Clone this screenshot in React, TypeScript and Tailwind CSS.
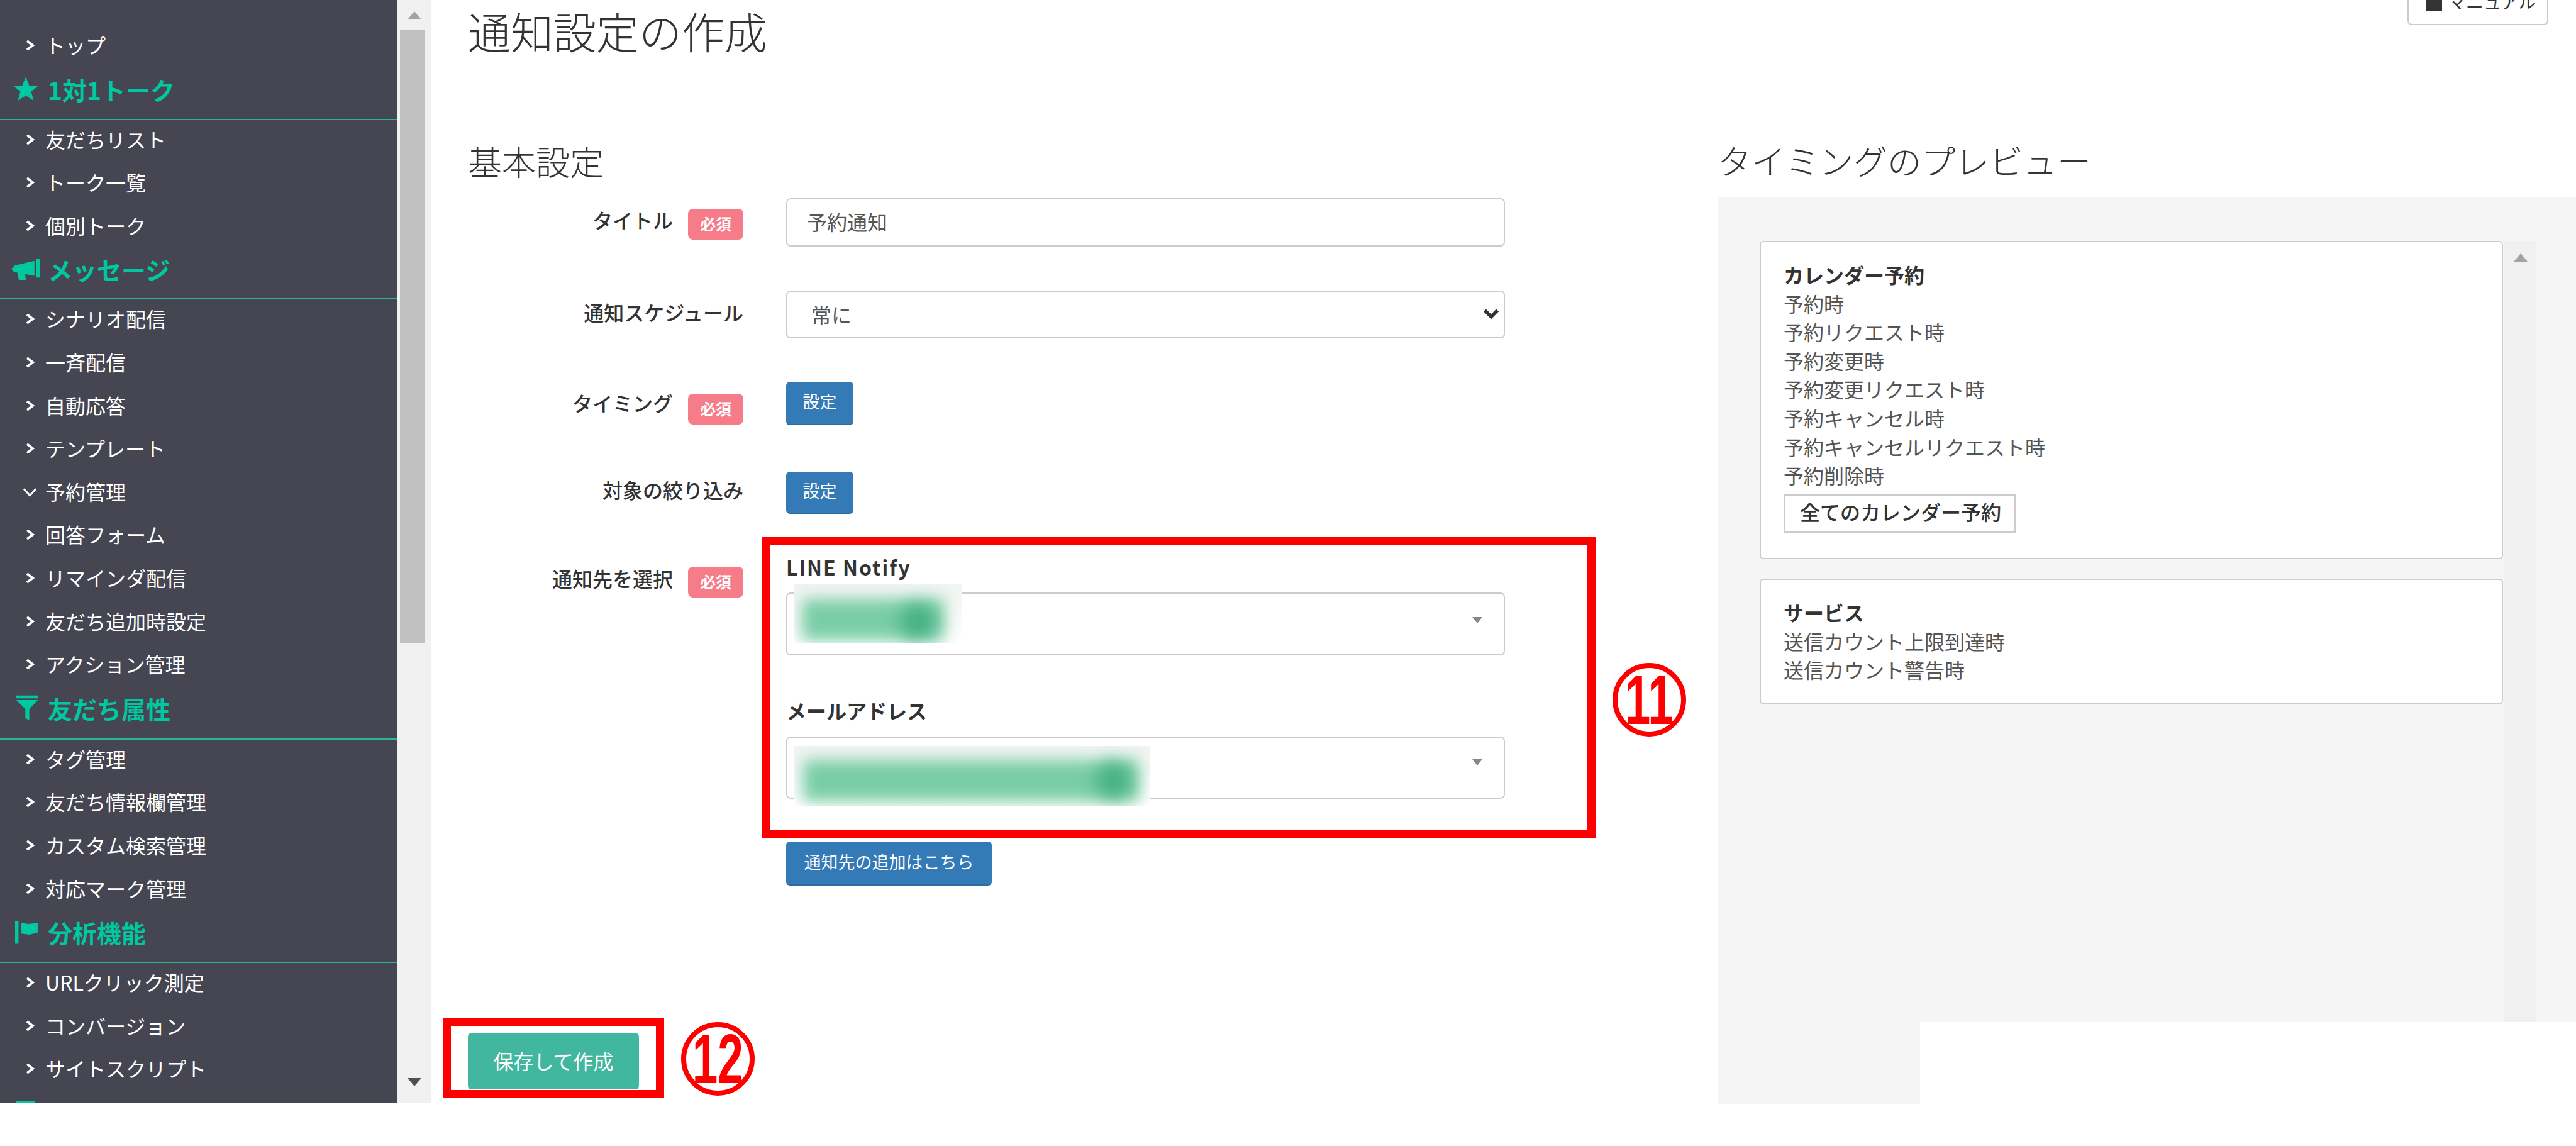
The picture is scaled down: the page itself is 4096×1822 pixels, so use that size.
import React from "react";

type Entry =
  | { kind: "item"; label: string; open?: boolean }
  | { kind: "head"; label: string; icon: "star" | "horn" | "filter" | "flag"; h: string };

const menu: Entry[] = [
  { kind: "item", label: "トップ" },
  { kind: "head", label: "1対1トーク", icon: "star", h: "h-[81px]" },
  { kind: "item", label: "友だちリスト" },
  { kind: "item", label: "トーク一覧" },
  { kind: "item", label: "個別トーク" },
  { kind: "head", label: "メッセージ", icon: "horn", h: "h-[80px]" },
  { kind: "item", label: "シナリオ配信" },
  { kind: "item", label: "一斉配信" },
  { kind: "item", label: "自動応答" },
  { kind: "item", label: "テンプレート" },
  { kind: "item", label: "予約管理", open: true },
  { kind: "item", label: "回答フォーム" },
  { kind: "item", label: "リマインダ配信" },
  { kind: "item", label: "友だち追加時設定" },
  { kind: "item", label: "アクション管理" },
  { kind: "head", label: "友だち属性", icon: "filter", h: "h-[82px]" },
  { kind: "item", label: "タグ管理" },
  { kind: "item", label: "友だち情報欄管理" },
  { kind: "item", label: "カスタム検索管理" },
  { kind: "item", label: "対応マーク管理" },
  { kind: "head", label: "分析機能", icon: "flag", h: "h-[81px]" },
  { kind: "item", label: "URLクリック測定" },
  { kind: "item", label: "コンバージョン" },
  { kind: "item", label: "サイトスクリプト" },
];

function HeadIcon({ icon }: { icon: string }) {
  if (icon === "star")
    return (
      <svg viewBox="0 0 40 40" className="w-[40px] h-[40px] ml-[21px] fill-[#00c8a0]">
        <polygon points="20,0 25.5,14 40,14.5 28.5,23.5 32.5,38 20,30 7.5,38 11.5,23.5 0,14.5 14.5,14" />
      </svg>
    );
  if (icon === "horn")
    return (
      <svg viewBox="0 0 50 36" className="w-[46px] h-[33px] ml-[18px] fill-[#00c8a0]">
        <rect x="43" y="0" width="6" height="32" />
        <polygon points="0,17 6,11 40,3 40,29 24,26 25,36 13,36 10,23 5,23" />
      </svg>
    );
  if (icon === "filter")
    return (
      <svg viewBox="0 0 40 44" className="w-[36px] h-[41px] ml-[25px] fill-[#00c8a0]">
        <rect x="0" y="0" width="40" height="5" />
        <polygon points="1,8 39,8 24,24 24,44 17,40 17,24" />
      </svg>
    );
  return (
    <svg viewBox="0 0 40 40" className="w-[36px] h-[37px] ml-[24px] fill-[#00c8a0]">
      <rect x="0" y="0" width="6" height="40" />
      <polygon points="10,3 24,5 40,3 40,20 26,24 10,22" />
    </svg>
  );
}

function Sidebar() {
  return (
    <nav className="w-[631px] h-[1754px] bg-[#454652] pt-[41px] overflow-hidden shrink-0">
      {menu.map((m) =>
        m.kind === "item" ? (
          <div key={m.label} className="h-[68.6px] flex items-start text-[32px] leading-[60px] text-white">
            {m.open ? (
              <svg viewBox="0 0 24 16" className="w-[23px] h-[16px] ml-[36px] mr-[13px] mt-[24px] fill-none stroke-white stroke-[3]">
                <path d="M2 2 L12 13 L22 2" />
              </svg>
            ) : (
              <svg viewBox="0 0 16 18" className="w-[16px] h-[18px] ml-[40px] mr-[16px] mt-[22px] fill-none stroke-white stroke-[4]">
                <path d="M3 2 L12 9 L3 16" />
              </svg>
            )}
            <span className="whitespace-nowrap">{m.label}</span>
          </div>
        ) : (
          <div key={m.label} className={`${m.h} flex items-start border-b-2 border-[#2bb596]`}>
            <div className="w-[76px] h-[64px] flex items-center shrink-0">
              <HeadIcon icon={m.icon} />
            </div>
            <span className="text-[39px] leading-[64px] font-bold text-[#00c8a0] whitespace-nowrap">{m.label}</span>
          </div>
        )
      )}
      <div className="ml-[26px] mt-[14px]">
        <div className="w-[30px] h-[10px] bg-[#00c8a0]" />
      </div>
    </nav>
  );
}

function Scrollbar() {
  return (
    <div className="w-[55px] h-[1754px] bg-[#f1f1f1] flex flex-col shrink-0">
      <div className="h-[48px] flex items-center justify-center">
        <svg viewBox="0 0 22 13" className="w-[22px] h-[13px] fill-[#a3a3a3]">
          <polygon points="11,0 22,13 0,13" />
        </svg>
      </div>
      <div className="h-[975px] w-[40px] ml-[5px] bg-[#c1c1c1]" />
      <div className="flex-1" />
      <div className="h-[40px] flex items-start justify-center">
        <svg viewBox="0 0 22 13" className="w-[22px] h-[13px] fill-[#505050]">
          <polygon points="0,0 22,0 11,13" />
        </svg>
      </div>
    </div>
  );
}

function Badge({ top }: { top: string }) {
  return (
    <span className={`${top} w-[88px] h-[49px] rounded-[8px] bg-[#f67c8a] text-white text-[25px] leading-[46px] font-bold text-center shrink-0`}>
      必須
    </span>
  );
}

function Label({ text, pt, badge }: { text: string; pt: string; badge?: string }) {
  return (
    <div className="w-[438px] mr-[68px] flex justify-end gap-[24px] shrink-0">
      <span className={`${pt} text-[32px] leading-[40px] font-medium text-[#333333] whitespace-nowrap`}>{text}</span>
      {badge && <Badge top={badge} />}
    </div>
  );
}

function Btn({ children, cls }: { children: React.ReactNode; cls: string }) {
  return (
    <button className={`${cls} bg-[#337ab7] border-b-2 border-[#2e6da4] rounded-[6px] text-white text-[27px] pb-[4px] flex items-center justify-center whitespace-nowrap`}>
      {children}
    </button>
  );
}

function Blurred({ cls, barCls, blobCls }: { cls: string; barCls: string; blobCls: string }) {
  return (
    <div className={`absolute ${cls} h-[95px] bg-linear-to-b from-[#f1f4f2] to-white overflow-hidden`}>
      <div className={`absolute ${barCls} bg-[#79cda6] blur-[12px]`} />
      <div className={`absolute ${blobCls} w-[56px] h-[56px] rounded-full bg-[#45b083] blur-[14px]`} />
    </div>
  );
}

function Caret({ cls }: { cls: string }) {
  return (
    <svg viewBox="0 0 16 10" className={`absolute ${cls} right-[34px] w-[16px] h-[10px] fill-[#888888]`}>
      <polygon points="0,0 16,0 8,10" />
    </svg>
  );
}

function FormColumn() {
  return (
    <section className="w-[2045px] pl-[58px] shrink-0">
      <h1 className="text-[68px] leading-[98px] font-light text-[#333333] whitespace-nowrap">通知設定の作成</h1>
      <h2 className="mt-[118px] text-[54px] leading-[80px] font-light text-[#333333]">基本設定</h2>

      <div className="mt-[19px] flex items-start">
        <Label text="タイトル" pt="pt-[14px]" badge="mt-[17px]" />
        <input
          readOnly
          value="予約通知"
          className="w-[1143px] h-[77px] border-2 border-[#cccccc] rounded-[7px] pl-[31px] pb-[4px] text-[32px] text-[#555555] bg-white"
        />
      </div>

      <div className="mt-[70px] flex items-start">
        <Label text="通知スケジュール" pt="pt-[14px]" />
        <div className="relative w-[1143px] h-[76px]">
          <select className="w-full h-full appearance-none border-2 border-[#cccccc] rounded-[7px] pl-[38px] pb-[3px] text-[32px] text-[#555555] bg-white">
            <option>常に</option>
          </select>
          <svg viewBox="0 0 24 16" className="absolute right-[7px] top-[28px] w-[30px] h-[18px] fill-none stroke-[#333333] stroke-[5]">
            <path d="M3 3 L12 12 L21 3" />
          </svg>
        </div>
      </div>

      <div className="mt-[69px] flex items-start">
        <Label text="タイミング" pt="pt-[13px]" badge="mt-[19px]" />
        <Btn cls="w-[107px] h-[69px]">設定</Btn>
      </div>

      <div className="mt-[74px] flex items-start">
        <Label text="対象の絞り込み" pt="pt-[8px]" />
        <Btn cls="w-[107px] h-[67px]">設定</Btn>
      </div>

      <div className="mt-[66px] flex items-start">
        <Label text="通知先を選択" pt="pt-[16px]" badge="mt-[18px]" />
        <div className="w-[1143px]">
          <div className="-mt-[2px] text-[32px] leading-[40px] font-bold tracking-[2px] text-[#333333]">LINE Notify</div>
          <div className="relative mt-[21px] h-[100px] border-2 border-[#cccccc] rounded-[7px] bg-white">
            <Caret cls="top-[37px]" />
            <Blurred
              cls="left-[11px] -top-[16px] w-[267px]"
              barCls="left-[12px] top-[24px] w-[226px] h-[66px]"
              blobCls="left-[168px] top-[32px]"
            />
          </div>
          <div className="mt-[67px] text-[32px] leading-[40px] font-bold text-[#333333]">メールアドレス</div>
          <div className="relative mt-[22px] h-[99px] border-2 border-[#cccccc] rounded-[7px] bg-white">
            <Caret cls="top-[34px]" />
            <Blurred
              cls="left-[11px] top-[13px] w-[565px]"
              barCls="left-[14px] top-[22px] w-[534px] h-[66px]"
              blobCls="left-[479px] top-[27px]"
            />
          </div>
          <Btn cls="mt-[68px] w-[327px] h-[70px]">通知先の追加はこちら</Btn>
        </div>
      </div>

      <button className="mt-[234px] w-[272px] h-[90px] bg-[#41b79f] rounded-[6px] pb-[3px] text-white text-[32px]">保存して作成</button>
    </section>
  );
}

function Card({ title, lines, cls, children }: { title: string; lines: string[]; cls: string; children?: React.ReactNode }) {
  return (
    <div className={`${cls} w-[1182px] bg-white border-2 border-[#cccccc] rounded-[6px] pl-[36px] pt-[29px] text-[32px] leading-[45.6px] text-[#555555]`}>
      <div className="font-bold text-[#333333]">{title}</div>
      {lines.map((l) => (
        <div key={l}>{l}</div>
      ))}
      {children}
    </div>
  );
}

function PreviewColumn() {
  return (
    <section className="flex-1">
      <div className="flex justify-end pr-[44px]">
        <button className="w-[224px] h-[41px] overflow-hidden border-2 border-t-0 border-[#cccccc] rounded-b-[7px] bg-white flex items-start pl-[27px] -mt-px">
          <span className="w-[26px] h-[18px] bg-[#333333] shrink-0" />
          <span className="ml-[10px] -mt-[12px] text-[28px] leading-[30px] text-[#333333] whitespace-nowrap">マニュアル</span>
        </button>
      </div>
      <h2 className="mt-[175px] text-[54px] leading-[80px] font-light text-[#333333] whitespace-nowrap">タイミングのプレビュー</h2>
      <div className="mt-[18px] h-[1442px] bg-[#f5f5f5] pl-[67px] pt-[70px] flex items-stretch">
        <div className="w-[1182px]">
          <Card
            title="カレンダー予約"
            cls="h-[506px]"
            lines={["予約時", "予約リクエスト時", "予約変更時", "予約変更リクエスト時", "予約キャンセル時", "予約キャンセルリクエスト時", "予約削除時"]}
          >
            <div className="mt-[7px] w-[369px] h-[61px] border-2 border-[#cccccc] pl-[24px] leading-[50px] font-medium text-[#333333]">
              全てのカレンダー予約
            </div>
          </Card>
          <Card title="サービス" cls="mt-[31px] h-[200px]" lines={["送信カウント上限到達時", "送信カウント警告時"]} />
        </div>
        <div className="ml-[2px] w-[51px] bg-[#f0f0f0] flex justify-center pt-[20px]">
          <svg viewBox="0 0 22 13" className="w-[22px] h-[13px] fill-[#a3a3a3]">
            <polygon points="11,0 22,13 0,13" />
          </svg>
        </div>
      </div>
    </section>
  );
}

function Circled({ text, cls }: { text: string; cls: string }) {
  return (
    <div className={`absolute ${cls} w-[117px] h-[117px] rounded-full border-[8px] border-[#ff0000] flex items-center justify-center`}>
      <span className="text-[112px] leading-none font-bold text-[#ff0000] scale-x-[0.65] font-['Liberation_Sans',sans-serif]">{text}</span>
    </div>
  );
}

export default function App() {
  return (
    <div className="relative w-[4096px] h-[1822px] overflow-hidden bg-white flex items-start font-['Noto_Sans_CJK_JP','Noto_Sans',sans-serif]">
      <Sidebar />
      <Scrollbar />
      <FormColumn />
      <PreviewColumn />

      {/* 後から画像に載せた注釈 */}
      <div className="absolute left-[3053px] top-[1625px] w-[1043px] h-[197px] bg-white" />
      <div className="absolute left-[1211px] top-[853px] w-[1326px] h-[479px] border-[13px] border-[#ff0000]" />
      <div className="absolute left-[704px] top-[1619px] w-[352px] h-[127px] border-[13px] border-[#ff0000]" />
      <Circled text="11" cls="left-[2564px] top-[1054px]" />
      <Circled text="12" cls="left-[1083px] top-[1625px]" />
    </div>
  );
}
